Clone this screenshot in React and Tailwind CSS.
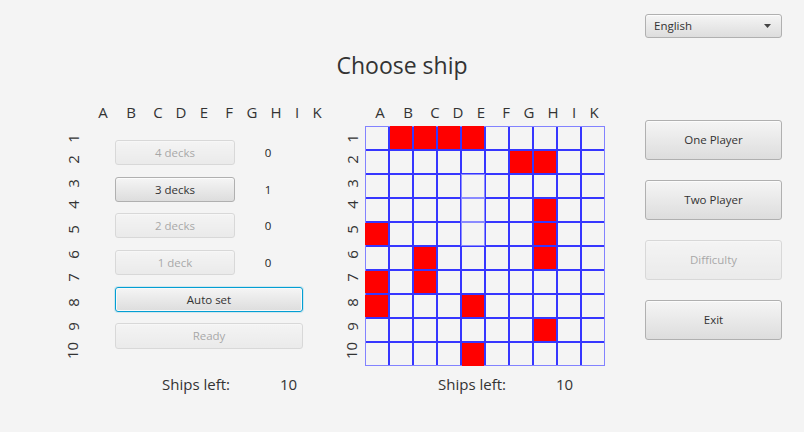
import React from "react";

const LETTERS = ["A", "B", "C", "D", "E", "F", "G", "H", "I", "K"];
const LETTER_ML = ["", "ml-[16px]", "ml-[15px]", "ml-[11px]", "ml-[11px]", "ml-[13px]", "ml-[11px]", "ml-[12px]", "ml-[9px]", "ml-[8px]"];
const ROW_MT = ["", "mt-[9px]", "mt-[12px]", "mt-[9px]", "mt-[13px]", "mt-[13px]", "mt-[11px]", "mt-[13px]", "mt-[12px]", "mt-[12px]"];

const RED = {
  0: [1, 2, 3, 4],
  1: [6, 7],
  3: [7],
  4: [0, 7],
  5: [2, 7],
  6: [0, 2],
  7: [0, 4],
  8: [7],
  9: [4],
};
const LIGHT = ["2-4", "3-4", "4-4"];

const surface =
  "flex items-center rounded-[3px] border bg-gradient-to-b from-[#f5f5f5] to-[#dddddd] text-[#333333] text-[11.5px]";
const btnBase = surface + " justify-center border-[#b0b0b0] shadow-[inset_0_1px_0_#fcfcfc]";

function LetterRow({ className }) {
  return (
    <div className={"flex h-[20px] items-center text-[15px] leading-[20px] text-[#333333] " + className}>
      {LETTERS.map((l, i) => (
        <span key={l} className={"flex w-[12px] justify-center " + LETTER_ML[i]}>
          {l}
        </span>
      ))}
    </div>
  );
}

function NumberCol({ className }) {
  return (
    <div className={"flex flex-col text-[15px] text-[#333333] " + className}>
      {Array.from({ length: 10 }, (_, i) => (
        <div key={i} className={"flex h-[12px] w-full items-center justify-center " + ROW_MT[i]}>
          <span className="-rotate-90 whitespace-nowrap leading-none">{i + 1}</span>
        </div>
      ))}
    </div>
  );
}

function Cell({ r, c }) {
  const red = (RED[r] || []).includes(c);
  const light = LIGHT.includes(r + "-" + c);
  let cls = "h-[22px] w-[22px] ";
  if (red) {
    cls += "bg-[#ff0000] ";
    if (r === 0) cls += "shadow-[0_-1px_0_#ff0000] ";
    else if (r === 9) cls += "shadow-[0_1px_0_#ff0000] ";
    else if (c === 0) cls += "shadow-[-1px_0_0_#ff0000] ";
  } else {
    cls += "bg-[#f4f4f4] ";
  }
  if (light) cls += "outline outline-1 outline-[#8a8aff] ";
  return <div className={cls} />;
}

function Board() {
  return (
    <div className="border border-[#8282ff]">
      <div className="grid grid-cols-10 gap-[2px] bg-[#3636ff]">
        {Array.from({ length: 100 }, (_, k) => (
          <Cell key={k} r={Math.floor(k / 10)} c={k % 10} />
        ))}
      </div>
    </div>
  );
}

function ShipButton({ label, count, enabled, mt }) {
  return (
    <div className={"flex items-center " + mt}>
      <div className={btnBase + " h-[25px] w-[120px] " + (enabled ? "" : "opacity-40")}>{label}</div>
      <span className="ml-[23px] flex w-[20px] justify-center text-[11.5px] text-[#222222]">{count}</span>
    </div>
  );
}

function ShipsLeft({ className }) {
  return (
    <div className={"flex h-[20px] items-center text-[15px] leading-[20px] text-[#333333] " + className}>
      <span className="w-[118px]">Ships left:</span>
      <span>10</span>
    </div>
  );
}

export default function App() {
  return (
    <div className="flex h-[432px] w-[804px] flex-col overflow-hidden bg-[#f4f4f4] font-['Open_Sans',sans-serif]">
      <div className="flex justify-end pr-[22px] pt-[14px]">
        <div
          className={
            surface +
            " h-[24px] w-[137px] justify-between border-[#b0b0b0] pl-[8px] pr-[10px] shadow-[inset_0_1px_0_#fcfcfc]"
          }
        >
          <span>English</span>
          <svg width="7" height="4" viewBox="0 0 7 4">
            <polygon points="0,0 7,0 3.5,4" fill="#444444" />
          </svg>
        </div>
      </div>

      <div className="mt-[11px] text-center text-[23px] leading-[32px] text-[#333333]">Choose ship</div>

      <div className="mt-[21px] flex items-start pl-[60px]">
        {/* Left panel */}
        <div className="flex w-[280px] flex-col">
          <LetterRow className="pl-[37px]" />
          <div className="flex items-start">
            <NumberCol className="w-[26px] pt-[10px]" />
            <div className="ml-[29px] flex flex-col pt-[18px]">
              <ShipButton label="4 decks" count="0" enabled={false} mt="" />
              <ShipButton label="3 decks" count="1" enabled={true} mt="mt-[12px]" />
              <ShipButton label="2 decks" count="0" enabled={false} mt="mt-[11px]" />
              <ShipButton label="1 deck" count="0" enabled={false} mt="mt-[12px]" />
              <div
                className={
                  surface +
                  " mt-[12px] h-[25px] w-[188px] justify-center border-[#039ed3] shadow-[inset_0_0_0_1px_#f9f9f9,0_0_0_1px_rgba(3,158,211,0.15)]"
                }
              >
                Auto set
              </div>
              <div className={btnBase + " mt-[11px] h-[26px] w-[188px] opacity-40"}>Ready</div>
            </div>
          </div>
          <ShipsLeft className="mt-[18px] pl-[102px]" />
        </div>

        {/* Right board */}
        <div className="flex w-[305px] flex-col">
          <LetterRow className="pl-[34px]" />
          <div className="flex items-start">
            <NumberCol className="w-[24px] pt-[10px]" />
            <div className="ml-[1px] mt-[4px]">
              <Board />
            </div>
          </div>
          <ShipsLeft className="mt-[8px] pl-[98px]" />
        </div>

        {/* Menu */}
        <div className="mt-[18px] flex flex-col gap-[20px]">
          <div className={btnBase + " h-[40px] w-[137px]"}>One Player</div>
          <div className={btnBase + " h-[40px] w-[137px]"}>Two Player</div>
          <div className={btnBase + " h-[40px] w-[137px] opacity-40"}>Difficulty</div>
          <div className={btnBase + " h-[40px] w-[137px]"}>Exit</div>
        </div>
      </div>
    </div>
  );
}
